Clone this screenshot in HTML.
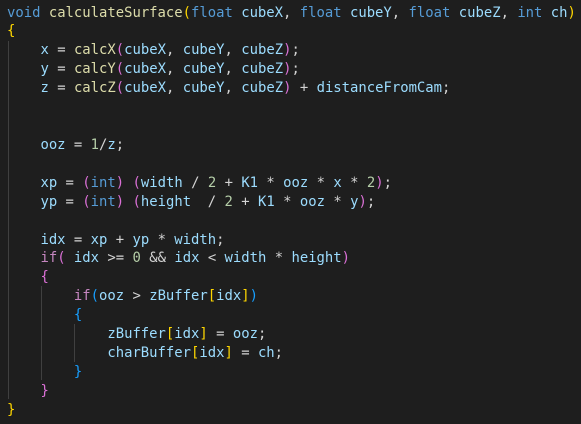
<!DOCTYPE html>
<html><head><meta charset="utf-8"><style>
html,body{margin:0;padding:0;background:#1e1e1e;width:581px;height:424px;overflow:hidden}
pre{margin:0;position:absolute;left:7px;top:3.5px;font-family:"DejaVu Sans Mono","Liberation Mono",monospace;font-size:13.9px;line-height:18.92px;color:#9cdcfe;white-space:pre}
.k{color:#569cd6}.f{color:#dcdcaa}.o{color:#d4d4d4}.n{color:#b5cea8}.c{color:#c586c0}
.g{color:#ffd700}.p{color:#da70d6}.b{color:#179fff}
.gl{position:absolute;width:1px;background:#404040}
</style></head><body>
<div class="gl" style="left:8px;top:41px;height:358px"></div>
<div class="gl" style="left:41px;top:286px;height:94px"></div>
<div class="gl" style="left:74px;top:324px;height:38px"></div>
<pre><span class="k">void</span> <span class="f">calculateSurface</span><span class="g">(</span><span class="k">float</span> cubeX<span class="o">,</span> <span class="k">float</span> cubeY<span class="o">,</span> <span class="k">float</span> cubeZ<span class="o">,</span> <span class="k">int</span> ch<span class="g">)</span>
<span class="g">{</span>
    x <span class="o">=</span> <span class="f">calcX</span><span class="p">(</span>cubeX<span class="o">,</span> cubeY<span class="o">,</span> cubeZ<span class="p">)</span><span class="o">;</span>
    y <span class="o">=</span> <span class="f">calcY</span><span class="p">(</span>cubeX<span class="o">,</span> cubeY<span class="o">,</span> cubeZ<span class="p">)</span><span class="o">;</span>
    z <span class="o">=</span> <span class="f">calcZ</span><span class="p">(</span>cubeX<span class="o">,</span> cubeY<span class="o">,</span> cubeZ<span class="p">)</span> <span class="o">+</span> distanceFromCam<span class="o">;</span>


    ooz <span class="o">=</span> <span class="n">1</span><span class="o">/</span>z<span class="o">;</span>

    xp <span class="o">=</span> <span class="p">(</span><span class="k">int</span><span class="p">)</span> <span class="p">(</span>width <span class="o">/</span> <span class="n">2</span> <span class="o">+</span> K1 <span class="o">*</span> ooz <span class="o">*</span> x <span class="o">*</span> <span class="n">2</span><span class="p">)</span><span class="o">;</span>
    yp <span class="o">=</span> <span class="p">(</span><span class="k">int</span><span class="p">)</span> <span class="p">(</span>height  <span class="o">/</span> <span class="n">2</span> <span class="o">+</span> K1 <span class="o">*</span> ooz <span class="o">*</span> y<span class="p">)</span><span class="o">;</span>

    idx <span class="o">=</span> xp <span class="o">+</span> yp <span class="o">*</span> width<span class="o">;</span>
    <span class="c">if</span><span class="p">(</span> idx <span class="o">&gt;=</span> <span class="n">0</span> <span class="o">&amp;&amp;</span> idx <span class="o">&lt;</span> width <span class="o">*</span> height<span class="p">)</span>
    <span class="p">{</span>
        <span class="c">if</span><span class="b">(</span>ooz <span class="o">&gt;</span> zBuffer<span class="g">[</span>idx<span class="g">]</span><span class="b">)</span>
        <span class="b">{</span>
            zBuffer<span class="g">[</span>idx<span class="g">]</span> <span class="o">=</span> ooz<span class="o">;</span>
            charBuffer<span class="g">[</span>idx<span class="g">]</span> <span class="o">=</span> ch<span class="o">;</span>
        <span class="b">}</span>
    <span class="p">}</span>
<span class="g">}</span></pre>
</body></html>
